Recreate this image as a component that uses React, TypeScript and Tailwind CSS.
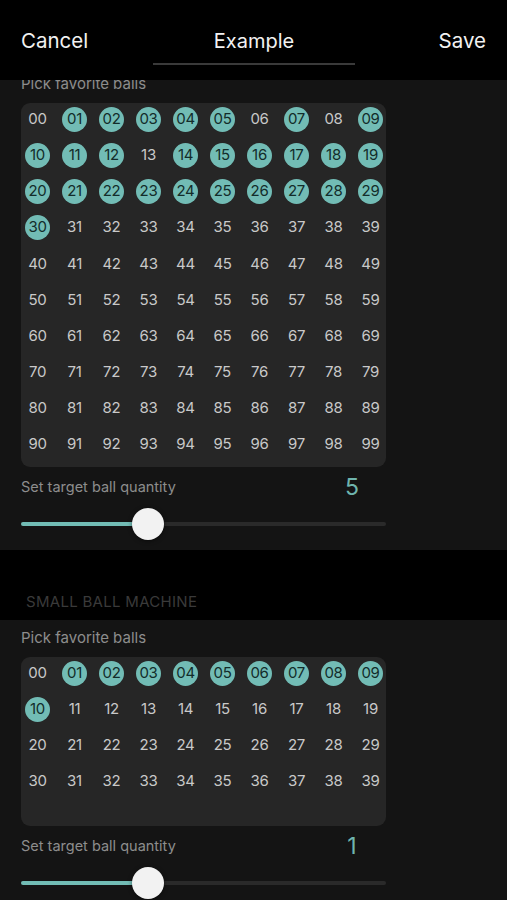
import React from "react";

const sel1 = new Set<number>([
  1, 2, 3, 4, 5, 7, 9, 10, 11, 12, 14, 15, 16, 17, 18, 19, 20, 21, 22, 23, 24,
  25, 26, 27, 28, 29, 30,
]);
const sel2 = new Set<number>([1, 2, 3, 4, 5, 6, 7, 8, 9, 10]);

function Ball({ n, on }: { n: number; on: boolean }) {
  const label = n.toString().padStart(2, "0");
  return (
    <div className="h-[32px] flex items-center justify-center">
      {on ? (
        <div className="w-[25px] h-[25px] rounded-full bg-[#72bcb5] flex items-center justify-center text-[15px] text-[#132c2a] tracking-[-0.3px]">
          {label}
        </div>
      ) : (
        <span className="text-[15px] text-[#c9c9c9] tracking-[-0.3px]">{label}</span>
      )}
    </div>
  );
}

function Grid({ count, sel, pb }: { count: number; sel: Set<number>; pb: string }) {
  return (
    <div className={`w-[365px] rounded-[9px] bg-[#262626] pt-[0.5px] ${pb}`}>
      <div className="grid grid-cols-[repeat(10,33px)] gap-x-[4px] gap-y-[4.2px]">
        {Array.from({ length: count }, (_, i) => (
          <Ball key={i} n={i} on={sel.has(i)} />
        ))}
      </div>
    </div>
  );
}

function Quantity({ value }: { value: string }) {
  return (
    <>
      <div className="w-[365px] h-[24px] flex items-center justify-between">
        <span className="text-[14.5px] text-[#8d8d8d]">Set target ball quantity</span>
        <span className="w-[40px] mr-[14px] text-center text-[23px] leading-[24px] text-[#6fb5ae]">
          {value}
        </span>
      </div>
      <div className="relative w-[365px] h-[32px] mt-[9px] flex items-center">
        <div className="w-full h-[4px] rounded-full bg-[#2a2a2a] flex">
          <div className="w-[127px] h-full rounded-full bg-[#72bcb5]" />
        </div>
        <div className="absolute left-[111px] top-0 w-[32px] h-[32px] rounded-full bg-[#f2f2f2] shadow-[0_1px_4px_rgba(0,0,0,0.5)]" />
      </div>
    </>
  );
}

export default function App() {
  return (
    <div
      className="w-[507px] h-[900px] overflow-hidden bg-black flex flex-col"
      style={{ fontFamily: "Inter, 'Noto Sans', sans-serif" }}
    >
      {/* header */}
      <div className="h-[80px] shrink-0 bg-black relative flex items-center justify-between px-[21px]">
        <span className="text-[20.5px] text-[#f2f2f2] mt-[3px]">Cancel</span>
        <div className="absolute left-[153px] w-[202px] top-[27px] flex flex-col items-center">
          <span className="text-[20px] leading-[28px] text-[#f2f2f2]">Example</span>
          <div className="mt-[8px] w-full h-[2px] bg-[#3a3a3a]" />
        </div>
        <span className="text-[20.5px] text-[#f2f2f2] mt-[3px]">Save</span>
      </div>

      {/* section 1 (scrolled, label partly under header) */}
      <div className="h-[470px] shrink-0 bg-[#141414] overflow-hidden px-[21px]">
        <div className="-mt-[6px] h-[20px] leading-[20px] text-[15px] text-[#8d8d8d]">
          Pick favorite balls
        </div>
        <div className="mt-[8.5px]">
          <Grid count={100} sel={sel1} pb="pb-[6px]" />
        </div>
        <div className="mt-[8px]">
          <Quantity value="5" />
        </div>
      </div>

      {/* band */}
      <div className="h-[70px] shrink-0 bg-black flex items-end pb-[7px] px-[26px]">
        <span className="text-[15px] tracking-[0.3px] text-[#3a3a3a] uppercase">Small ball machine</span>
      </div>

      {/* section 2 */}
      <div className="flex-1 bg-[#141414] px-[21px] pt-[8px]">
        <div className="h-[20px] leading-[20px] text-[15px] text-[#8d8d8d]">Pick favorite balls</div>
        <div className="mt-[8.5px]">
          <Grid count={40} sel={sel2} pb="pb-[28px]" />
        </div>
        <div className="mt-[8.5px]">
          <Quantity value="1" />
        </div>
      </div>
    </div>
  );
}
